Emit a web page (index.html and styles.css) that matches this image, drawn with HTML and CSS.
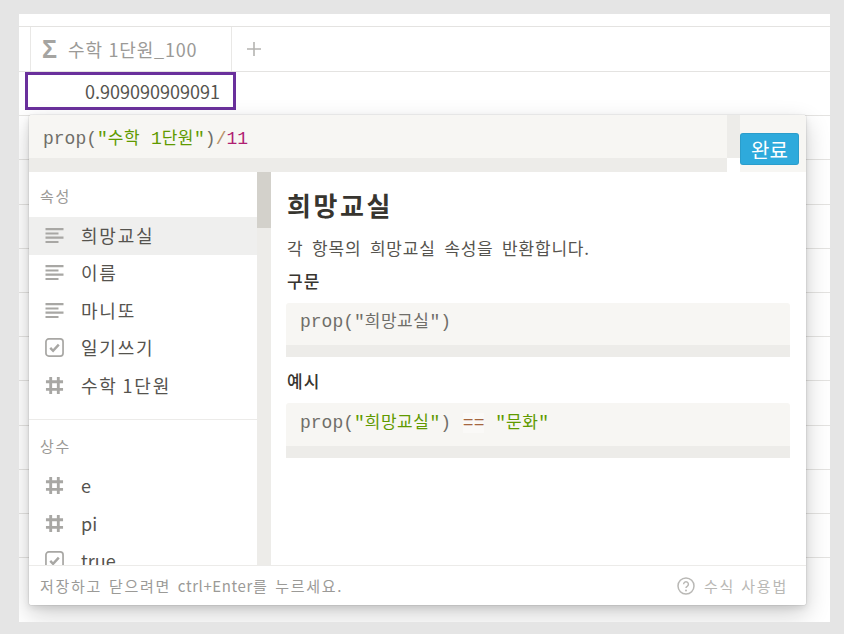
FILE: index.html
```
<!DOCTYPE html>
<html lang="ko">
<head>
<meta charset="utf-8">
<title>수식</title>
<link rel="stylesheet" href="styles.css">
</head>
<body>
<svg class="defs" width="0" height="0" aria-hidden="true">
  <symbol id="i-text" viewBox="0 0 18 15"><path d="M0 1.2h18M0 5.5h13M0 9.7h18M0 14h13" fill="none" stroke="currentColor" stroke-width="2.2"/></symbol>
  <symbol id="i-check" viewBox="0 0 20 20"><rect x="1" y="1" width="18" height="18" rx="3" fill="none" stroke="currentColor" stroke-width="1.8"/><path d="M5.5 10.5l3 3 6-6.5" fill="none" stroke="currentColor" stroke-width="2.6"/></symbol>
  <symbol id="i-num" viewBox="0 0 20 20"><path d="M6 1v18M14 1v18M1 6h18M1 14h18" fill="none" stroke="currentColor" stroke-width="3"/></symbol>
</svg>
<main class="page">
  <div class="top-row"></div>
  <div class="table-head">
    <div class="gutter"></div>
    <div class="head-cell"><span class="sigma">Σ</span><span class="head-label">수학 1단원_100</span></div>
    <svg class="add" viewBox="0 0 14 14" aria-hidden="true"><path d="M7 0v14M0 7h14" fill="none" stroke="currentColor" stroke-width="1.6"/></svg>
  </div>
  <div class="rows">
    <div class="row"></div><div class="row"></div><div class="row"></div><div class="row"></div>
    <div class="row"></div><div class="row"></div><div class="row"></div><div class="row"></div>
    <div class="row"></div><div class="row"></div><div class="row"></div>
  </div>
  <div class="selected">0.909090909091</div>

  <section class="popup">
    <header class="editor">
      <div class="editor-code">
        <div class="code-line"><code class="code"><span class="fn">prop(</span><span class="str">"<span class="ko">수학</span> 1<span class="ko">단원</span>"</span><span class="fn">)</span><span class="op">/</span><span class="num">11</span></code><div class="vbar"></div></div>
        <div class="hbar-row"><div class="hbar"></div><div class="corner"></div></div>
      </div>
      <button class="done">완료</button>
    </header>
    <div class="body">
      <aside class="list">
        <div class="list-title">속성</div>
        <div class="item active"><svg class="ico ico-text"><use href="#i-text"/></svg><span>희망교실</span></div>
        <div class="item"><svg class="ico ico-text"><use href="#i-text"/></svg><span>이름</span></div>
        <div class="item"><svg class="ico ico-text"><use href="#i-text"/></svg><span>마니또</span></div>
        <div class="item"><svg class="ico"><use href="#i-check"/></svg><span>일기쓰기</span></div>
        <div class="item"><svg class="ico"><use href="#i-num"/></svg><span>수학 1단원</span></div>
        <div class="divider"></div>
        <div class="list-title">상수</div>
        <div class="item latin"><svg class="ico"><use href="#i-num"/></svg><span>e</span></div>
        <div class="item latin"><svg class="ico"><use href="#i-num"/></svg><span>pi</span></div>
        <div class="item latin"><svg class="ico"><use href="#i-check"/></svg><span>true</span></div>
      </aside>
      <div class="scroll"><div class="thumb"></div></div>
      <article class="doc">
        <h2>희망교실</h2>
        <p>각 항목의 희망교실 속성을 반환합니다.</p>
        <h3>구문</h3>
        <div class="block"><code class="code"><span class="fn">prop("<span class="ko">희망교실</span>")</span></code><div class="block-bar"></div></div>
        <h3 class="second">예시</h3>
        <div class="block tall"><code class="code"><span class="fn">prop(</span><span class="str">"<span class="ko">희망교실</span>"</span><span class="fn">)</span> <span class="eq">==</span> <span class="str">"<span class="ko">문화</span>"</span></code><div class="block-bar"></div></div>
      </article>
    </div>
    <footer class="foot">
      <span>저장하고 닫으려면 <span class="keys">ctrl+Enter</span>를 누르세요.</span>
      <span class="help"><svg class="help-ico" viewBox="0 0 18 18"><circle cx="9" cy="9" r="8" fill="none" stroke="currentColor" stroke-width="1.5"/><path d="M6.6 7.2a2.4 2.4 0 1 1 3.6 2.1c-.8.5-1.2.9-1.2 1.8" fill="none" stroke="currentColor" stroke-width="1.5"/><circle cx="9" cy="13.4" r="1" fill="currentColor"/></svg>수식 사용법</span>
    </footer>
  </section>
</main>
</body>
</html>
```
FILE: styles.css
```
* { box-sizing: border-box; }
html, body { margin: 0; height: 100%; }
body {
  background: #e5e5e5;
  padding: 14px 14px 12px 19px;
  overflow: hidden;
  font-family: "Noto Sans CJK KR", "Noto Sans", sans-serif;
  color: #37352f;
}
.defs { position: absolute; }
.page {
  position: relative;
  height: 608px;
  background: #fff;
  overflow: hidden;
}
.top-row { height: 13px; border-bottom: 1px solid #e4e3e1; }
.table-head { display: flex; height: 44px; border-bottom: 1px solid #e4e3e1; box-sizing: content-box; }
.gutter { width: 11px; }
.head-cell {
  width: 202px;
  display: flex;
  align-items: center;
  gap: 10px;
  padding-left: 11px;
  border-left: 1px solid #e9e8e6;
  border-right: 1px solid #e9e8e6;
  font-size: 18px;
  color: #9b9a97;
}
.head-label { letter-spacing: .8px; margin-left: 1px; }
.sigma { font: 700 25px "Liberation Sans", sans-serif; color: #a5a4a1; }
.add { width: 14px; height: 14px; margin: 15px 0 0 15px; color: #b5b4b1; }
.row { height: 44.2px; border-bottom: 1px solid #e4e3e1; }
.selected {
  position: absolute;
  left: 6px;
  top: 58px;
  width: 211px;
  height: 38px;
  border: 3px solid #6a309c;
  padding-right: 13px;
  text-align: right;
  font-size: 18px;
  line-height: 33px;
  color: #55534e;
  background: #fff;
}
.popup {
  position: absolute;
  left: 10px;
  top: 101px;
  width: 777px;
  height: 490px;
  display: flex;
  flex-direction: column;
  background: #fff;
  border-radius: 3px;
  overflow: hidden;
  box-shadow: 0 0 0 1px rgba(15,15,15,.05), 0 3px 6px rgba(15,15,15,.1), 0 9px 24px rgba(15,15,15,.2);
}
.editor { display: flex; height: 57px; background: #f7f6f3; flex: none; }
.editor-code { width: 711px; height: 57px; display: flex; flex-direction: column; }
.code-line { flex: none; height: 43px; display: flex; justify-content: space-between; align-items: stretch; padding-left: 14px; }
.code-line .code { line-height: 48px; }
.vbar { width: 13px; background: #edece9; }
.hbar-row { display: flex; flex: none; height: 14px; }
.hbar { flex: 1; background: #edece9; }
.corner { width: 13px; background: #fff; }
.code {
  font-family: "Liberation Mono", "Noto Sans CJK KR", monospace;
  font-size: 18px;
  color: #6b6a66;
  white-space: pre;
}
.ko { font-size: 17px; letter-spacing: .5px; }
.fn { color: #6f6e69; }
.str { color: #5f9a00; }
.op { color: #b8926a; }
.num { color: #b01f72; }
.eq { color: #a5673f; background: #faf9f7; margin-left: 1px; }
.done {
  align-self: flex-start;
  margin-top: 18px;
  width: 59px;
  height: 32px;
  padding: 0;
  border: 0;
  border-radius: 3px;
  background: #2eaadc;
  color: #fff;
  font: 400 20px "Noto Sans CJK KR", sans-serif;
  box-shadow: inset 0 0 0 1px rgba(15,15,15,.08);
}
.body { flex: 1; display: flex; min-height: 0; }
.list { width: 228px; overflow: hidden; flex: none; }
.list-title { height: 45px; padding: 14px 0 0 11px; font-size: 15px; letter-spacing: 1.7px; line-height: 20px; color: #9b9a97; }
.item {
  height: 37.5px;
  display: flex;
  align-items: center;
  gap: 17px;
  padding-left: 16px;
  font-size: 18px;
  letter-spacing: 1.8px;
  word-spacing: -2px;
  color: #55534e;
}
.item.latin { letter-spacing: 0; }
.item span { margin-top: -2px; }
.item.active { background: #efefee; }
.ico { width: 19px; height: 19px; flex: none; color: #a8a7a4; margin-top: -1px; }
.ico-text { height: 15px; }
.divider { height: 1px; margin-top: 14px; background: #ecebe9; }
.divider + .list-title { padding-top: 16px; height: 48px; }
.scroll { width: 14px; background: #edece9; flex: none; }
.thumb { height: 56px; background: #d3d1cb; }
.doc { flex: 1; padding: 14px 16px 0 15px; min-width: 0; }
h2, p, h3 { margin-left: 1px; }
h2 { margin-top: 0; margin-bottom: 0; font-size: 26px; letter-spacing: 2.6px; line-height: 38px; font-weight: 700; color: #37352f; }
p { margin-top: 13px; margin-bottom: 0; font-size: 17px; letter-spacing: .8px; word-spacing: 3px; line-height: 22px; color: #55534e; }
h3 { margin-top: 10px; margin-bottom: 0; font-size: 17px; letter-spacing: 1px; line-height: 23px; font-weight: 500; color: #37352f; }
h3.second { margin-top: 12px; }
.block {
  margin-top: 11px;
  background: #f7f6f3;
  border-radius: 3px 3px 0 0;
  overflow: hidden;
}
.block .code { display: block; padding-left: 14px; line-height: 39px; height: 42px; }
.block.tall .code { line-height: 40px; height: 43px; }
.block-bar { height: 12px; background: #edece9; }
.foot {
  flex: none;
  height: 40px;
  display: flex;
  justify-content: space-between;
  align-items: center;
  padding: 0 18px 0 11px;
  border-top: 1px solid #ecebe9;
  background: #fff;
  font-size: 15px;
  letter-spacing: 1.7px;
  word-spacing: 1px;
  color: #9b9a97;
}
.keys { letter-spacing: .6px; }
.help { display: flex; align-items: center; gap: 9px; letter-spacing: 1.8px; word-spacing: 0; color: #b9b8b5; }
.help-ico { width: 18px; height: 18px; }
```
